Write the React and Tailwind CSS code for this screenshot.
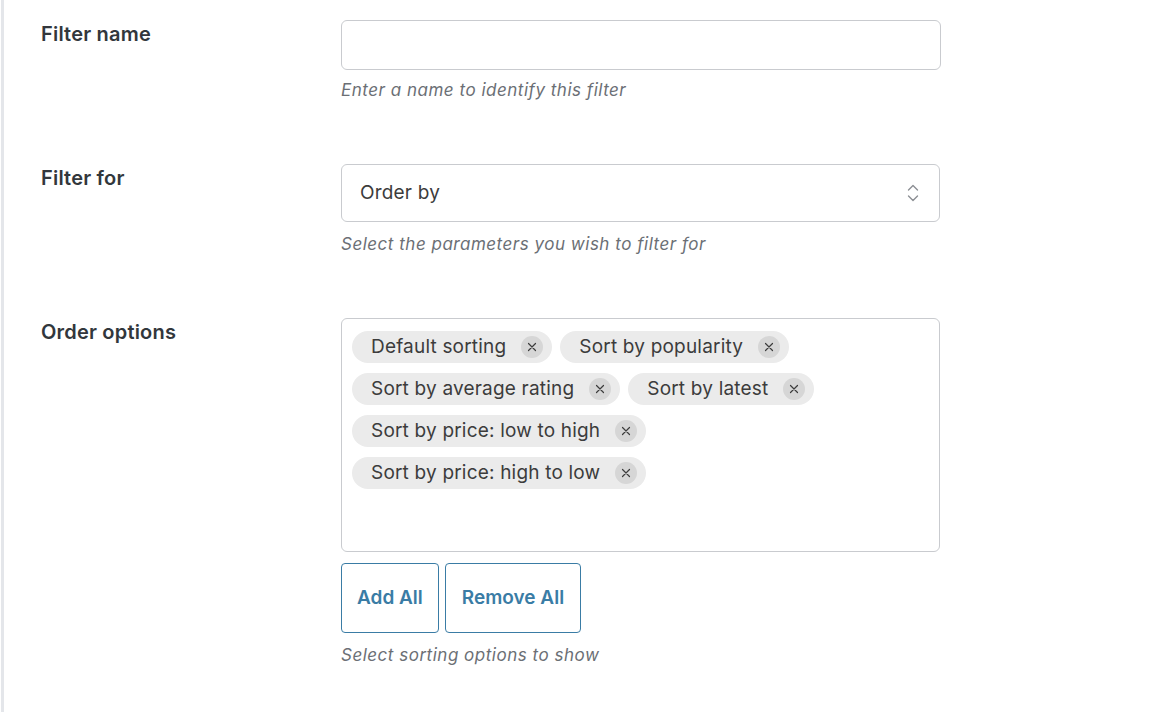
// App.jsx
// Filter settings form: name, filter type and sortable order options.

import React, { useState } from 'react'

const FONT = { fontFamily: 'Inter, "Noto Sans", sans-serif' }

const ORDER_OPTIONS = [
  'Default sorting',
  'Sort by popularity',
  'Sort by average rating',
  'Sort by latest',
  'Sort by price: low to high',
  'Sort by price: high to low',
]

// small "x" inside a grey circle
const RemoveDot = ({ onClick }) => (
  <button
    onClick={onClick}
    className="w-[22px] h-[22px] rounded-full bg-[#d6d6d6] flex items-center justify-center shrink-0"
  >
    <svg width="10" height="10" viewBox="0 0 10 10" fill="none">
      <path d="M1.5 1.5 L8.5 8.5 M8.5 1.5 L1.5 8.5" stroke="#3c3c3c" strokeWidth="1.2" strokeLinecap="round" />
    </svg>
  </button>
)

// up/down chevrons on the select
const UpDown = () => (
  <svg width="14" height="20" viewBox="0 0 14 20" fill="none">
    <path d="M2.5 7 L7 2.5 L11.5 7" stroke="#8c8f94" strokeWidth="1.4" strokeLinecap="round" strokeLinejoin="round" />
    <path d="M2.5 13 L7 17.5 L11.5 13" stroke="#8c8f94" strokeWidth="1.4" strokeLinecap="round" strokeLinejoin="round" />
  </svg>
)

const Label = ({ children }) => (
  <div className="text-[20px] leading-[28px] font-semibold tracking-[0.01em] text-[#32373c]">{children}</div>
)

const Help = ({ children, className = '' }) => (
  <p className={`text-[17px] leading-[24px] italic tracking-[0.03em] text-[#6b6f75] ${className}`}>{children}</p>
)

function App() {
  const [name, setName] = useState('')
  const [options, setOptions] = useState(ORDER_OPTIONS)

  return (
    <div style={FONT} className="min-h-screen bg-white border-l-[3px] border-[#e4e6ea] ml-[1px]">
      <div className="pl-[37px] pt-[20px] flex flex-col gap-[62px]">

        {/* ---- Filter name ---- */}
        <div className="grid grid-cols-[300px_600px]">
          <Label>Filter name</Label>
          <div>
            <input
              value={name}
              onChange={(e) => setName(e.target.value)}
              className="w-full h-[50px] border border-[#c9cbcf] rounded-[6px] px-4 text-[18px] outline-none"
            />
            <Help className="mt-[8px]">Enter a name to identify this filter</Help>
          </div>
        </div>

        {/* ---- Filter for ---- */}
        <div className="grid grid-cols-[300px_600px]">
          <Label>Filter for</Label>
          <div>
            <div className="w-[599px] h-[58px] border border-[#c9cbcf] rounded-[6px] pl-[18px] pr-[19px] flex items-center justify-between">
              <span className="text-[19px] tracking-[0.01em] text-[#3c3c3c]">Order by</span>
              <UpDown />
            </div>
            <Help className="mt-[10px]">Select the parameters you wish to filter for</Help>
          </div>
        </div>

        {/* ---- Order options ---- */}
        <div className="grid grid-cols-[300px_600px]">
          <Label>Order options</Label>
          <div>
            <div className="w-[599px] h-[234px] border border-[#c9cbcf] rounded-[6px] pl-[10px] pr-[10px] pt-[12px]">
              <div className="flex flex-wrap gap-x-[8px] gap-y-[10px] w-[470px]">
                {options.map((opt) => (
                  <div
                    key={opt}
                    className="h-[32px] rounded-full bg-[#ebebeb] pl-[19px] pr-[9px] flex items-center gap-[15px]"
                  >
                    <span className="text-[19px] tracking-[0.01em] text-[#3c3c3c] whitespace-nowrap">{opt}</span>
                    <RemoveDot onClick={() => setOptions(options.filter((o) => o !== opt))} />
                  </div>
                ))}
              </div>
            </div>
            <div className="flex gap-[6px] mt-[11px]">
              <button
                onClick={() => setOptions(ORDER_OPTIONS)}
                className="h-[70px] px-[15px] border border-[#3a7ca5] rounded-[4px] text-[19px] font-semibold text-[#3a7ca5]"
              >
                Add All
              </button>
              <button
                onClick={() => setOptions([])}
                className="h-[70px] px-[16px] border border-[#3a7ca5] rounded-[4px] text-[19px] font-semibold text-[#3a7ca5]"
              >
                Remove All
              </button>
            </div>
            <Help className="mt-[10px]">Select sorting options to show</Help>
          </div>
        </div>
      </div>
    </div>
  )
}

export default App
